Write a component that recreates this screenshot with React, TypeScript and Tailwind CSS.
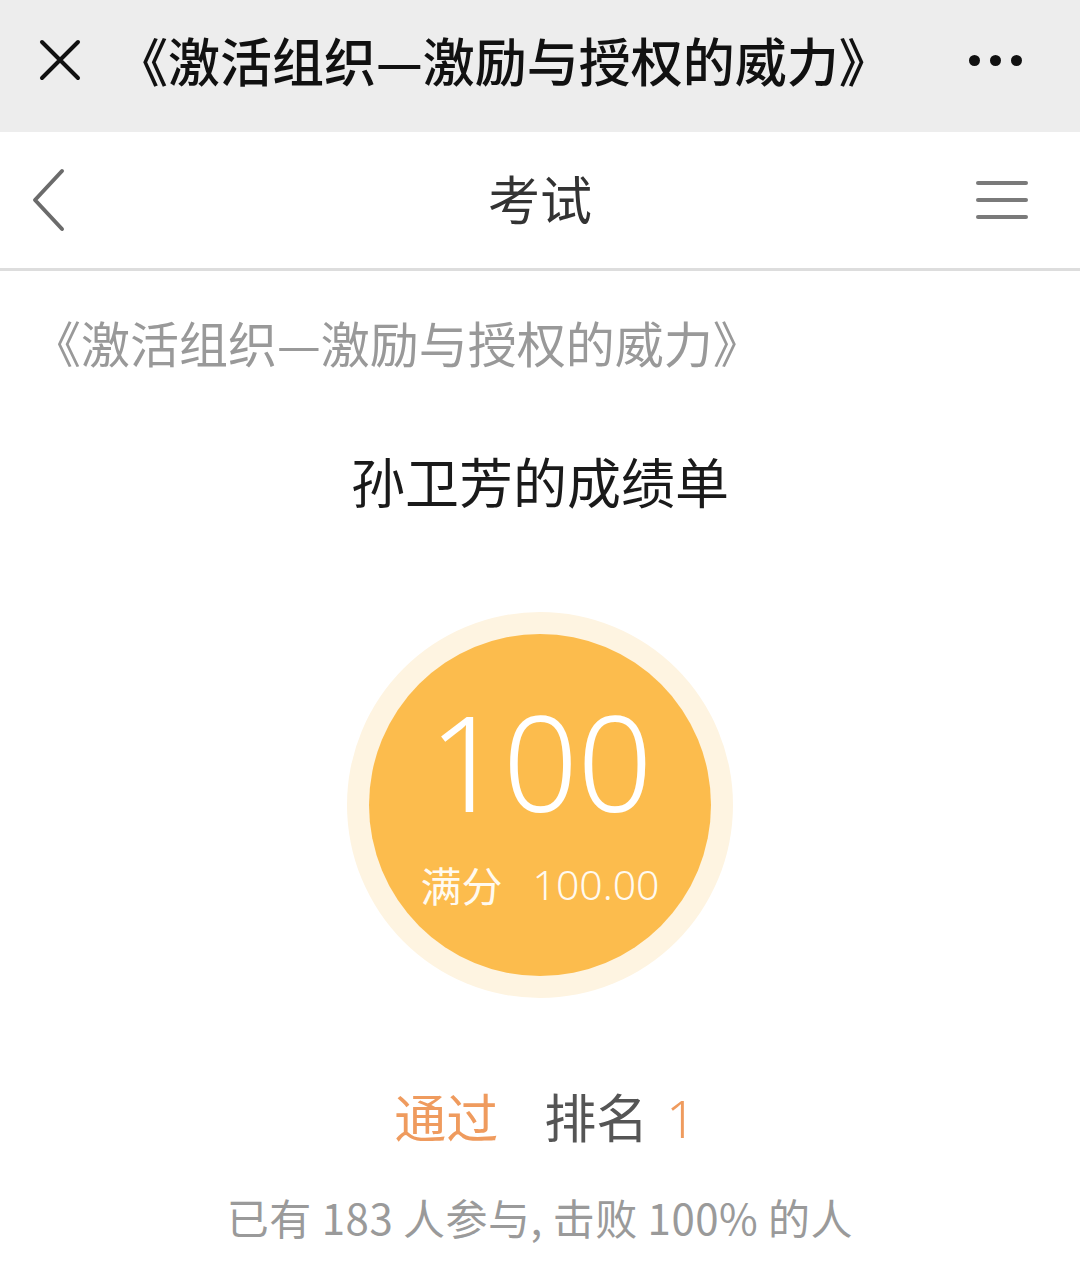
import React from 'react';

const FONT = "font-['PingFang_SC','Noto_Sans_CJK_SC','Noto_Sans',sans-serif]";

const CloseIcon = () => (
  <svg width="44" height="44" viewBox="0 0 44 44" className="shrink-0">
    <path d="M4 4 L40 40 M40 4 L4 40" stroke="#111" strokeWidth="4" strokeLinecap="round" />
  </svg>
);

const MoreDots = () => (
  <div className="flex items-center gap-[10px]">
    <span className="w-[11px] h-[11px] rounded-full bg-[#111]" />
    <span className="w-[11px] h-[11px] rounded-full bg-[#111]" />
    <span className="w-[11px] h-[11px] rounded-full bg-[#111]" />
  </div>
);

const BackIcon = () => (
  <svg width="36" height="64" viewBox="0 0 36 64">
    <path d="M32 3 L5 32 L32 61" fill="none" stroke="#6b6b6b" strokeWidth="4" strokeLinecap="round" strokeLinejoin="round" />
  </svg>
);

const MenuIcon = () => (
  <div className="flex flex-col gap-[13px] w-[52px]">
    <span className="h-[4px] rounded-full bg-[#7a7a7a]" />
    <span className="h-[4px] rounded-full bg-[#7a7a7a]" />
    <span className="h-[4px] rounded-full bg-[#7a7a7a]" />
  </div>
);

export default function App() {
  const title = '《激活组织—激励与授权的威力》';
  return (
    <div className={`w-[1080px] min-h-[1267px] bg-white ${FONT}`}>
      {/* 微信顶栏 */}
      <div className="h-[132px] bg-[#ededed] flex items-center pl-[38px] pr-[58px] pb-[12px]">
        <CloseIcon />
        <div className="ml-[34px] flex-1 text-[52px] leading-none text-[#111] font-medium whitespace-nowrap">
          {title}
        </div>
        <MoreDots />
      </div>

      {/* 页面导航 */}
      <div className="h-[139px] border-b-[3px] border-[#dddddd] grid grid-cols-[1fr_auto_1fr] items-center px-[30px]">
        <div className="flex">
          <BackIcon />
        </div>
        <div className="text-[52px] leading-none text-[#333] pb-[4px]">考试</div>
        <div className="flex justify-end pr-[22px]">
          <MenuIcon />
        </div>
      </div>

      {/* 内容 */}
      <div className="flex flex-col">
        <div className="mt-[46px] pl-[32px] text-[49px] leading-[49px] text-[#999] whitespace-nowrap">
          {title}
        </div>

        <div className="mt-[88px] text-center text-[54px] leading-[54px] text-[#1a1a1a]">
          孙卫芳的成绩单
        </div>

        <div className="mt-[104px] flex justify-center">
          <div className="w-[386px] h-[386px] rounded-full bg-[#fef4e1] flex items-center justify-center">
            <div className="w-[342px] h-[342px] rounded-full bg-[#fcbc4d] flex flex-col items-center text-white">
              <div className="mt-[62px] h-[130px] text-[132px] leading-[130px] font-light tracking-[-1px] font-['Noto_Sans',sans-serif]">100</div>
              <div className="mt-[36px] flex items-center gap-[30px] h-[44px] text-[41px] leading-[44px] text-[#fffaf0]">
                <span>满分</span>
                <span className="font-['Noto_Sans',sans-serif] font-light">100.00</span>
              </div>
            </div>
          </div>
        </div>

        <div className="mt-[92px] flex justify-center items-baseline text-[52px] leading-[52px] pl-[10px]">
          <span className="text-[#ef9b5e]">通过</span>
          <span className="ml-[46px] text-[#555]">排名</span>
          <span className="ml-[18px] text-[#ef9b5e] font-light font-['Noto_Sans',sans-serif]">1</span>
        </div>

        <div className="mt-[52px] text-center text-[42px] leading-[42px] text-[#9a9a9a] tracking-[0.5px]">
          已有 183 人参与, 击败 100% 的人
        </div>
      </div>
    </div>
  );
}
